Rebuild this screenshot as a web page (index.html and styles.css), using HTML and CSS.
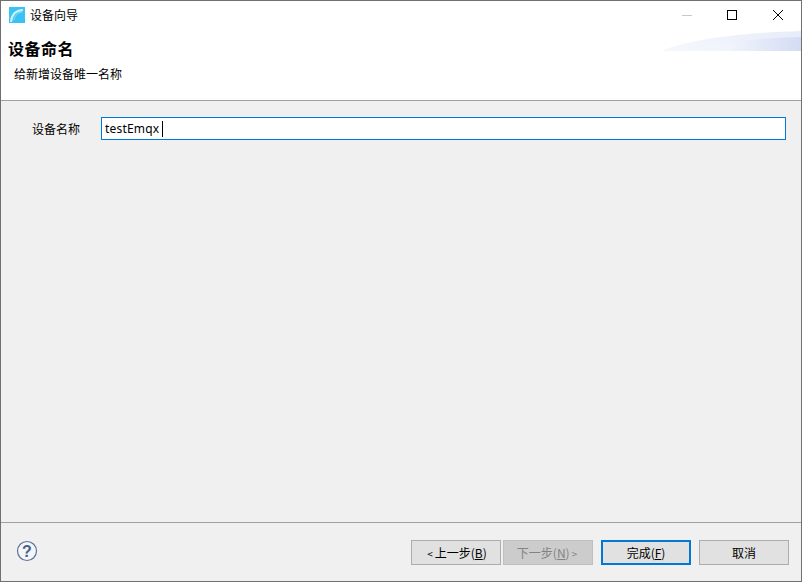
FILE: index.html
```html
<!DOCTYPE html>
<html lang="zh">
<head>
<meta charset="utf-8">
<title>设备向导</title>
<link rel="stylesheet" href="styles.css">
</head>
<body>
<div class="window">
  <div class="top">
    <svg class="banner" width="140" height="20" viewBox="0 0 140 20">
      <defs>
        <linearGradient id="bg1" x1="0" x2="1" y1="0" y2="0">
          <stop offset="0" stop-color="#f6f8fd"/>
          <stop offset="1" stop-color="#e6ecf9"/>
        </linearGradient>
        <linearGradient id="bg2" x1="0" x2="1" y1="0" y2="0">
          <stop offset="0" stop-color="#f6f8fd" stop-opacity="0"/>
          <stop offset="0.4" stop-color="#f1f4fc"/>
          <stop offset="1" stop-color="#d3dcf3"/>
        </linearGradient>
      </defs>
      <path d="M0 20C30 8 80 2 140 0V20Z" fill="url(#bg1)"/>
      <path d="M20 20C50 12 95 7 140 6V20Z" fill="url(#bg2)"/>
    </svg>
    <div class="titlebar">
      <svg class="appicon" width="16" height="16" viewBox="0 0 16 16">
        <rect width="16" height="16" fill="#38c3f2"/>
        <path d="M2 15C2.500 8 6 3.500 14 3" fill="none" stroke="#cdf0fc" stroke-width="2"/>
        <path d="M5 13C5.500 9 8 6 13 5" fill="none" stroke="#8fdcf7" stroke-width="1"/>
      </svg>
      <span class="title">设备向导</span>
      <div class="controls">
        <svg class="ctl" width="46" height="30" viewBox="0 0 46 30"><path d="M19 15.500H29" stroke="#c8c8c8" fill="none"/></svg>
        <svg class="ctl" width="46" height="30" viewBox="0 0 46 30"><rect x="18.500" y="10.500" width="9" height="9" fill="none" stroke="#000"/></svg>
        <svg class="ctl" width="46" height="30" viewBox="0 0 46 30"><path d="M18 10L28 20M28 10L18 20" stroke="#000" fill="none"/></svg>
      </div>
    </div>
    <h1 class="heading">设备命名</h1>
    <p class="desc">给新增设备唯一名称</p>
  </div>
  <main class="content">
    <label class="field-label" for="name">设备名称</label>
    <div class="input" id="name"><span>testEmqx</span><i class="caret"></i></div>
  </main>
  <footer class="footer">
    <svg class="help" width="22" height="22" viewBox="0 0 22 22">
      <circle cx="11" cy="11" r="9.500" fill="#f4f6fa" stroke="#5a7299" stroke-width="1.200"/>
      <text x="11" y="16.500" text-anchor="middle" class="help-mark">?</text>
    </svg>
    <div class="buttons">
      <div class="nav">
        <button class="btn"><span class="chev">&lt;</span>上一步(<u>B</u>)</button>
        <button class="btn disabled">下一步(<u>N</u>)<span class="chev">&gt;</span></button>
      </div>
      <button class="btn primary">完成(<u>F</u>)</button>
      <button class="btn">取消</button>
    </div>
  </footer>
</div>
</body>
</html>
```
FILE: styles.css
```css
* { box-sizing: border-box; }
html, body { margin: 0; padding: 0; }
body {
  width: 802px;
  height: 582px;
  overflow: hidden;
  font-family: "Noto Sans CJK SC", "Liberation Sans", sans-serif;
  font-size: 12px;
  color: #000;
}
.window {
  width: 802px;
  height: 582px;
  border: 1px solid #707070;
  display: flex;
  flex-direction: column;
  background: #f0f0f0;
}
.top {
  position: relative;
  height: 100px;
  flex: none;
  background: #fff;
  border-bottom: 1px solid #a0a0a0;
}
.banner {
  position: absolute;
  right: 0;
  top: 30px;
}
.titlebar {
  height: 28px;
  display: flex;
  align-items: center;
  padding-left: 8px;
}
.appicon { display: block; }
.title { margin-left: 5px; line-height: 16px; }
.controls { margin-left: auto; display: flex; }
.ctl { display: block; }
.heading {
  margin: 9px 0 0 7px;
  font-size: 16px;
  line-height: 20px;
  font-weight: 700;
  letter-spacing: 0.5px;
}
.desc {
  margin: 9px 0 0 13px;
  line-height: 14px;
}
.content {
  flex: 1;
  display: flex;
  align-items: flex-start;
  padding: 16px 15px 0 31px;
}
.field-label {
  width: 69px;
  flex: none;
  line-height: 23px;
}
.input {
  flex: 1;
  height: 23px;
  background: #fff;
  border: 1px solid #0078d7;
  display: flex;
  align-items: center;
  padding-left: 3px;
  font-family: "Noto Sans", "Liberation Sans", sans-serif;
  font-size: 12px;
  letter-spacing: 0.2px;
}
.caret {
  display: block;
  width: 1px;
  height: 16px;
  margin-left: 3px;
  background: #000;
}
.footer {
  height: 59px;
  flex: none;
  border-top: 1px solid #a0a0a0;
  display: flex;
  align-items: flex-start;
  padding: 17px 12px 0 15px;
}
.help { display: block; }
.help-mark {
  font-family: "Liberation Sans", sans-serif;
  font-size: 16px;
  font-weight: 700;
  fill: #46608c;
}
.buttons { margin-left: auto; display: flex; gap: 8px; }
.nav { display: flex; gap: 2px; }
.btn {
  width: 90px;
  height: 25px;
  padding: 0;
  background: #e1e1e1;
  border: 1px solid #adadad;
  font: inherit;
  color: #000;
  line-height: 1;
}
.chev {
  font-size: 10px;
  margin: 0 2px;
}
.btn.disabled {
  background: #cccccc;
  border-color: #bfbfbf;
  color: #838383;
}
.btn.primary {
  border: 2px solid #0078d7;
}
```
